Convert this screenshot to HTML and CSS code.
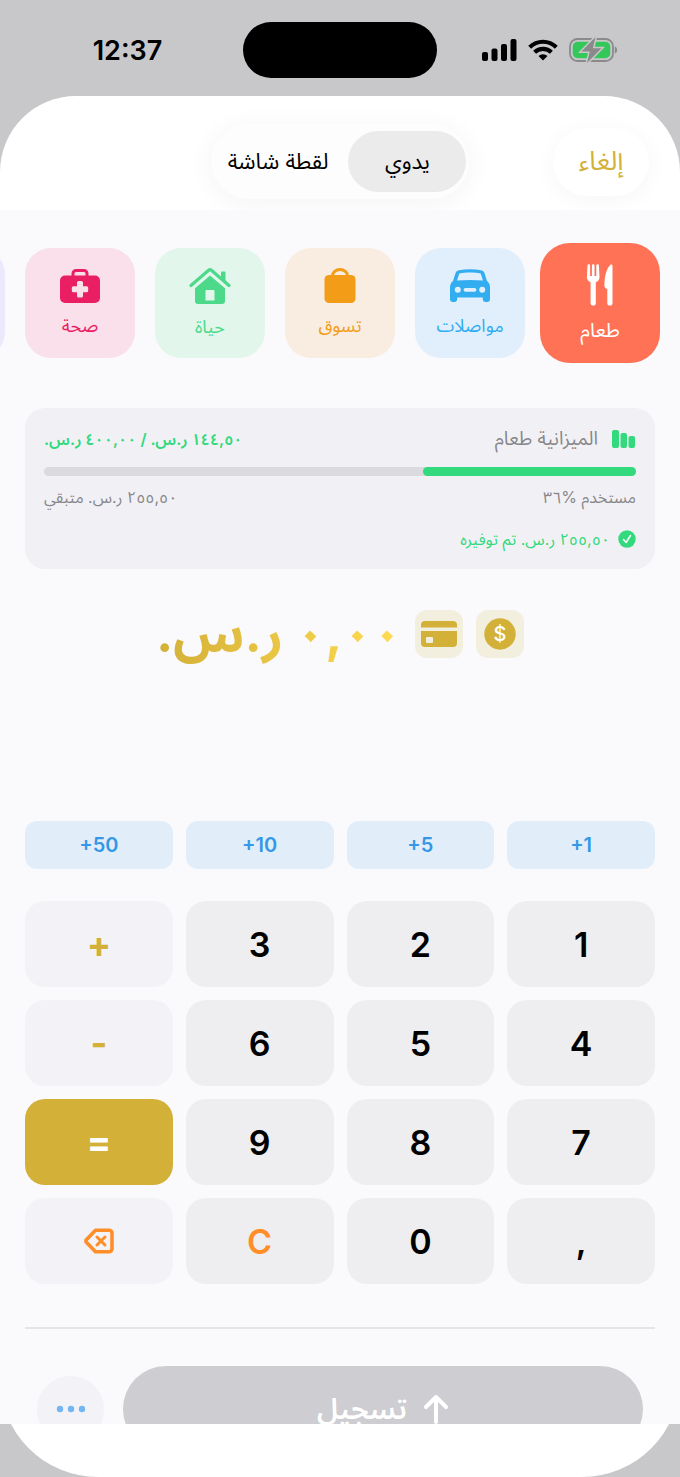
FILE: index.html
```html
<!DOCTYPE html>
<html lang="ar" dir="rtl">
<head>
  <meta charset="UTF-8" />
  <meta name="viewport" content="width=device-width, initial-scale=1" />
  <title>إضافة مصروف</title>
  <link rel="stylesheet" href="styles.css">
</head>
<body>
  <div class="status-bar" dir="ltr">
    <span class="time">12:37</span>
    <div class="island"></div>
    <div class="status-icons">
      <svg width="35" height="22" viewBox="0 0 35 22">
        <rect x="0" y="13" width="6" height="9" rx="2"/>
        <rect x="9.500" y="9.500" width="6" height="12.500" rx="2"/>
        <rect x="19" y="5" width="6" height="17" rx="2"/>
        <rect x="28.500" y="0" width="6" height="22" rx="2"/>
      </svg>
      <svg width="30" height="22" viewBox="0 0 30 22" fill="none" stroke="#000" stroke-width="4.200">
        <path d="M1.700 8.200a19 19 0 0 1 26.600 0"/>
        <path d="M6.600 13.300a12 12 0 0 1 16.800 0"/>
        <path d="M15 21.500l-4.500-4.500a6.500 6.500 0 0 1 9 0z" fill="#000" stroke="none"/>
      </svg>
      <svg width="49" height="26" viewBox="0 0 49 26">
        <rect x="1" y="2" width="43" height="22" rx="7.500" fill="none" stroke="#8a8a8c" stroke-width="1.800"/>
        <rect x="3.700" y="4.700" width="37.600" height="16.600" rx="5" fill="#34c759"/>
        <path d="M45.800 9.500c3 .8 3 6.200 0 7z" fill="#8a8a8c"/>
        <path d="M26.500 0L12.500 14.500h8.300L18 26 32.500 11.300h-8.600z" fill="#8a8a8c" stroke="#c8c8ca" stroke-width="3" paint-order="stroke"/>
      </svg>
    </div>
  </div>

  <div class="sheet">
    <header class="sheet-header">
      <button class="cancel" type="button">إلغاء</button>
      <div class="segmented">
        <button class="segment active" type="button">يدوي</button>
        <button class="segment" type="button">لقطة شاشة</button>
      </div>
    </header>

    <main class="content">
      <div class="categories">
        <button class="category food selected" type="button">
          <svg width="42" height="42" viewBox="0 0 42 42" fill="currentColor">
            <path d="M8.500 1.500a1.300 1.300 0 0 1 2.600 0V12h1.800V1.500a1.300 1.300 0 0 1 2.600 0V12h1.800V1.500a1.300 1.300 0 0 1 2.600 0l.6 11.500c0 3-1.800 4.500-3.700 5.300V39a2.600 2.600 0 0 1-5.200 0V18.300C9.700 17.500 7.900 16 7.900 13z"/>
            <path d="M33.500 2v37a2.600 2.600 0 0 1-5.200 0V25c-2-.5-2.900-1.600-2.900-3.500C25.500 11 28 4 31.500.8c1-.8 2-.3 2 1.200z"/>
          </svg>
          <span>طعام</span>
        </button>
        <button class="category transport" type="button">
          <svg width="42" height="36" viewBox="0 0 42 36" fill="currentColor">
            <path fill-rule="evenodd" d="M10 2.300C17 1 25 1 32 2.300c2 .4 3 1.500 3.600 3.200L38 13c2 1.300 3 3.700 3 6.500V31a2.800 2.800 0 0 1-3 3h-1.200a2.800 2.800 0 0 1-3-3v-1.500H8.200V31a2.800 2.800 0 0 1-3 3H4a2.800 2.800 0 0 1-3-3V19.500C1 16.700 2 14.300 4 13l2.400-7.500C7 3.800 8 2.700 10 2.300zM10.300 5.500L8 12.500c8-.8 18-.8 26 0l-2.300-7c-6-1.200-15.400-1.200-21.400 0zM8.800 18.800a3 3 0 1 0 0 6 3 3 0 0 0 0-6zm24.400 0a3 3 0 1 0 0 6 3 3 0 0 0 0-6zM16.500 19.900a1.900 1.900 0 0 0 0 3.800h9a1.900 1.900 0 0 0 0-3.800z"/>
          </svg>
          <span>مواصلات</span>
        </button>
        <button class="category shopping" type="button">
          <svg width="42" height="36" viewBox="0 0 42 36" fill="currentColor">
            <path d="M13.500 10V8a7.500 6.500 0 0 1 15 0v2" fill="none" stroke="currentColor" stroke-width="3"/>
            <rect x="5.500" y="7" width="31" height="28" rx="4.500"/>
          </svg>
          <span>تسوق</span>
        </button>
        <button class="category life" type="button">
          <svg width="42" height="38" viewBox="0 0 42 38" fill="currentColor">
            <path d="M2 18.500L19.600 3.200a2.200 2.200 0 0 1 2.800 0L40 18.500" fill="none" stroke="currentColor" stroke-width="3.200" stroke-linecap="round"/>
            <path d="M32 5.500a1 1 0 0 1 1-1h2.500a1 1 0 0 1 1 1v9L32 10.500z"/>
            <path fill-rule="evenodd" d="M21 8.500L36 21.300V34a3 3 0 0 1-3 3H9a3 3 0 0 1-3-3V21.300zM17.500 23a1 1 0 0 0-1 1v9.500h9V24a1 1 0 0 0-1-1z"/>
          </svg>
          <span>حياة</span>
        </button>
        <button class="category health" type="button">
          <svg width="42" height="36" viewBox="0 0 42 36" fill="currentColor">
            <path d="M14 9V5.500a3 3 0 0 1 3-3h8a3 3 0 0 1 3 3V9" fill="none" stroke="currentColor" stroke-width="3"/>
            <path fill-rule="evenodd" d="M6 7.500h30a5 5 0 0 1 5 5V30a5 5 0 0 1-5 5H6a5 5 0 0 1-5-5V12.500a5 5 0 0 1 5-5zM19.500 13a1.500 1.500 0 0 0-1.500 1.500v3.700h-3.700a1.500 1.500 0 0 0-1.500 1.500v3a1.500 1.500 0 0 0 1.500 1.500H18v3.700a1.500 1.500 0 0 0 1.500 1.500h3a1.500 1.500 0 0 0 1.500-1.500v-3.700h3.700a1.500 1.500 0 0 0 1.500-1.500v-3a1.500 1.500 0 0 0-1.500-1.500H24v-3.700a1.500 1.500 0 0 0-1.500-1.500z"/>
          </svg>
          <span>صحة</span>
        </button>
        <button class="category more-category" type="button" aria-label="المزيد"></button>
      </div>

      <section class="budget">
        <div class="budget-row title-row">
          <span class="with-icon">
            <svg width="24" height="18" viewBox="0 0 24 18" fill="#32d97d">
              <rect x="0" y="0" width="7" height="18" rx="2"/>
              <rect x="8.500" y="3" width="6.500" height="15" rx="2"/>
              <rect x="16.500" y="6" width="6.500" height="12" rx="2"/>
            </svg>
            الميزانية طعام
          </span>
          <span class="spent green">١٤٤,٥٠ ر.س. / ٤٠٠,٠٠ ر.س.</span>
        </div>
        <div class="bar"><div class="bar-fill" style="width: 36%"></div></div>
        <div class="budget-row">
          <span>مستخدم %٣٦</span>
          <span>٢٥٥,٥٠ ر.س. متبقي</span>
        </div>
        <div class="saved green">
          <svg width="18" height="18" viewBox="0 0 18 18">
            <circle cx="9" cy="9" r="8.700" fill="#32d97d"/>
            <path d="M5.500 9.500l2.600 3 4.400-7" fill="none" stroke="#fff" stroke-width="1.500" stroke-linecap="round" stroke-linejoin="round"/>
          </svg>
          ٢٥٥,٥٠ ر.س. تم توفيره
        </div>
      </section>

      <div class="amount">
        <button class="pay-btn" type="button" aria-label="نقدي">
          <svg width="32" height="32" viewBox="0 0 32 32">
            <circle cx="16" cy="16" r="15.700" fill="#d3b038"/>
            <text class="dollar" x="16" y="23" text-anchor="middle">$</text>
          </svg>
        </button>
        <button class="pay-btn" type="button" aria-label="بطاقة">
          <svg width="38" height="28" viewBox="0 0 38 28" fill="#d3b038">
            <path d="M5 1h28a4 4 0 0 1 4 4v2.500H1V5a4 4 0 0 1 4-4z"/>
            <path fill-rule="evenodd" d="M1 11h36v12a4 4 0 0 1-4 4H5a4 4 0 0 1-4-4zM7 17a1 1 0 0 0-1 1v4a1 1 0 0 0 1 1h5a1 1 0 0 0 1-1v-4a1 1 0 0 0-1-1z"/>
          </svg>
        </button>
        <span class="amount-value">٠,٠٠ ر.س.</span>
      </div>

      <div class="grid quick">
        <button class="quick-btn" type="button" dir="ltr">+1</button>
        <button class="quick-btn" type="button" dir="ltr">+5</button>
        <button class="quick-btn" type="button" dir="ltr">+10</button>
        <button class="quick-btn" type="button" dir="ltr">+50</button>
      </div>

      <div class="grid keypad">
        <button class="key" type="button">1</button>
        <button class="key" type="button">2</button>
        <button class="key" type="button">3</button>
        <button class="key op" type="button">+</button>
        <button class="key" type="button">4</button>
        <button class="key" type="button">5</button>
        <button class="key" type="button">6</button>
        <button class="key op" type="button">-</button>
        <button class="key" type="button">7</button>
        <button class="key" type="button">8</button>
        <button class="key" type="button">9</button>
        <button class="key equals" type="button">=</button>
        <button class="key" type="button">,</button>
        <button class="key" type="button">0</button>
        <button class="key clear" type="button">C</button>
        <button class="key op" type="button" aria-label="حذف">
          <svg width="30" height="26" viewBox="0 0 30 26" fill="none" stroke="#ff8d28" stroke-width="3.600" stroke-linecap="round" stroke-linejoin="round">
            <path d="M11.500 2.200H25a3 3 0 0 1 3 3v15.600a3 3 0 0 1-3 3H11.500L2.600 14.600a2.200 2.200 0 0 1 0-3.200z"/>
            <path d="M13 9l8 8M21 9l-8 8" stroke-width="3"/>
          </svg>
        </button>
      </div>

      <div class="actions">
        <button class="submit" type="button">
          <svg width="26" height="30" viewBox="0 0 26 30" fill="none" stroke="#fff" stroke-width="4" stroke-linecap="round" stroke-linejoin="round">
            <path d="M13 28V3M3 13L13 3l10 10"/>
          </svg>
          تسجيل
        </button>
        <button class="options" type="button" aria-label="خيارات">
          <svg width="30" height="8" viewBox="0 0 30 8" fill="#74b5f2">
            <circle cx="4" cy="4" r="3.200"/>
            <circle cx="15" cy="4" r="3.200"/>
            <circle cx="26" cy="4" r="3.200"/>
          </svg>
        </button>
      </div>
    </main>
  </div>
</body>
</html>
```

FILE: styles.css
```css
* {
  box-sizing: border-box;
}

body {
  margin: 0;
  height: 100vh;
  display: flex;
  flex-direction: column;
  overflow: hidden;
  background: #c8c8ca;
  font-family: Inter, "Noto Sans Arabic", "DejaVu Sans", sans-serif;
}

button {
  border: none;
  padding: 0;
  font-family: inherit;
  cursor: pointer;
}

svg {
  display: block;
  flex-shrink: 0;
}

/* status bar */
.status-bar {
  display: grid;
  grid-template-columns: 1fr auto 1fr;
  align-items: center;
  padding: 22px 0 18px;
}

.time {
  justify-self: center;
  padding-left: 12px;
  font-size: 27px;
  font-weight: 600;
}

.island {
  width: 194px;
  height: 56px;
  border-radius: 28px;
  background: #000;
}

.status-icons {
  justify-self: center;
  display: flex;
  align-items: center;
  gap: 11px;
  padding-right: 18px;
}

/* sheet */
.sheet {
  flex: 1;
  min-height: 0;
  display: flex;
  flex-direction: column;
  padding-bottom: 53px;
  background: #fff;
  border-radius: 76px 76px 98px 98px;
}

.sheet-header {
  display: grid;
  grid-template-columns: 1fr auto 1fr;
  align-items: center;
  padding: 28px 31px 11px;
}

.cancel {
  justify-self: start;
  width: 96px;
  height: 68px;
  border-radius: 34px;
  background: #fff;
  color: #d3b038;
  font-size: 26px;
  box-shadow: 0 4px 24px rgba(0,0,0,0.04);
}

.segmented {
  display: flex;
  padding: 7px 3px;
  border-radius: 38px;
  background: #fdfdfd;
  box-shadow: 0 4px 28px rgba(0,0,0,0.05);
}

.segment {
  height: 61px;
  padding: 0 20px 0 14px;
  border-radius: 31px;
  background: none;
  color: #000;
  font-size: 22px;
}

.segment.active {
  width: 118px;
  padding: 0;
  background: #ebebeb;
}

.content {
  flex: 1;
  min-height: 0;
  overflow: hidden;
  padding: 33px 25px 0;
  background: #fafafd;
}

/* categories */
.categories {
  display: flex;
  align-items: center;
  gap: 20px;
}

.category {
  flex: 0 0 110px;
  height: 110px;
  display: flex;
  flex-direction: column;
  align-items: center;
  justify-content: center;
  gap: 10px;
  border-radius: 26px;
  font-size: 18px;
  line-height: 24px;
}

.category.selected {
  flex-basis: 120px;
  height: 120px;
  margin: 0 -5px;
  gap: 12px;
  border-radius: 30px;
  font-size: 20px;
}

.food { background: #ff7256; color: #fff; }
.transport { background: #e1effc; color: #32adf0; }
.shopping { background: #f9ede1; color: #f39c18; }
.life { background: #e3f6ec; color: #4cd98a; }
.health { background: #f9e0eb; color: #e91e63; }
.more-category { background: #ece9fc; }

/* budget card */
.budget {
  margin-top: 45px;
  padding: 19px 19px 18px;
  border-radius: 20px;
  background: #f1f1f5;
  color: #87878b;
  font-size: 16px;
  line-height: 24px;
}

.budget-row {
  display: flex;
  justify-content: space-between;
}

.title-row {
  font-size: 19px;
}

.with-icon {
  display: flex;
  align-items: center;
  gap: 14px;
}

.green { color: #32d97d; }

.spent {
  font-size: 16px;
  font-weight: 600;
}

.bar {
  height: 9px;
  margin: 16px 0 9px;
  border-radius: 5px;
  background: #dadadf;
}

.bar-fill {
  height: 100%;
  border-radius: 5px;
  background: #32d97d;
}

.saved {
  display: flex;
  align-items: center;
  gap: 8px;
  margin-top: 18px;
}

/* amount */
.amount {
  display: flex;
  align-items: center;
  justify-content: center;
  gap: 13px;
  height: 48px;
  margin-top: 41px;
}

.pay-btn {
  width: 48px;
  height: 48px;
  display: flex;
  align-items: center;
  justify-content: center;
  border-radius: 12px;
  background: #f2efdf;
}

.dollar {
  fill: #fff;
  font-size: 20px;
  font-weight: 500;
}

.amount-value {
  font-size: 52px;
  font-weight: 700;
  line-height: 90px;
  white-space: nowrap;
  color: transparent;
  background: linear-gradient(to left, #ffdc50, #d3b038);
  -webkit-background-clip: text;
  background-clip: text;
}

/* keypad */
.grid {
  display: grid;
  grid-template-columns: repeat(4, 1fr);
  gap: 13px;
}

.quick {
  margin-top: 163px;
}

.quick-btn {
  height: 48px;
  border-radius: 12px;
  background: #e1eefa;
  color: #3498e6;
  font-size: 20px;
  font-weight: 600;
}

.keypad {
  margin-top: 32px;
}

.key {
  height: 86px;
  display: flex;
  align-items: center;
  justify-content: center;
  border-radius: 20px;
  background: #eeeef0;
  color: #000;
  font-size: 34px;
  font-weight: 600;
}

.key.op {
  background: #f2f2f7;
  color: #d3b038;
}

.key.equals {
  background: #d3b038;
  color: #fff;
}

.key.op,
.key.equals {
  font-size: 36px;
  font-weight: 700;
}

.key.clear {
  color: #ff8d28;
}

/* bottom actions */
.actions {
  display: flex;
  align-items: center;
  gap: 19px;
  margin-top: 43px;
  padding: 37px 12px;
  border-top: 2px solid #e5e5e8;
}

.submit {
  flex: 1;
  height: 86px;
  display: flex;
  align-items: center;
  justify-content: center;
  gap: 16px;
  border-radius: 43px;
  background: #cecdd2;
  color: #fff;
  font-size: 29px;
  font-weight: 600;
}

.options {
  width: 67px;
  height: 67px;
  display: flex;
  align-items: center;
  justify-content: center;
  border-radius: 50%;
  background: #f2f2f7;
}
```
